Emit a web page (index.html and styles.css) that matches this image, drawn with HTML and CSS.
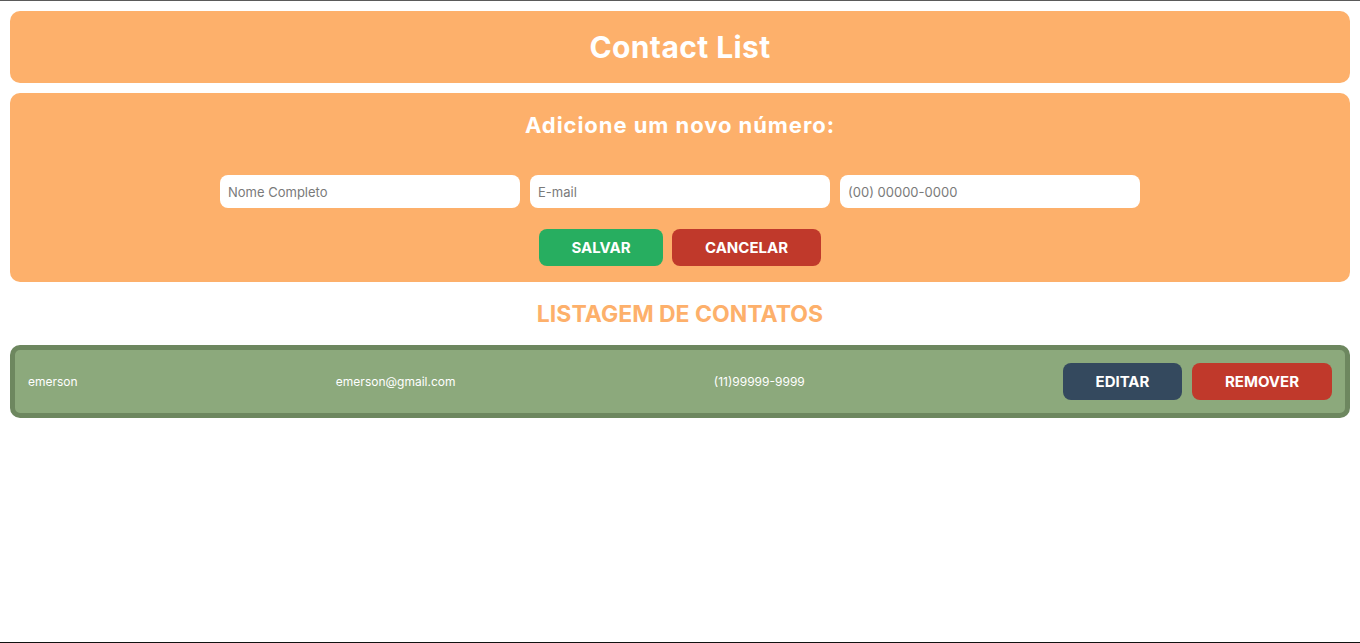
FILE: index.html
```html
<!DOCTYPE html>
<html lang="pt-BR">
<head>
<meta charset="utf-8">
<title>Contact List</title>
<link rel="stylesheet" href="styles.css">
</head>
<body>
  <header class="header">
    <h1 class="header-title">Contact List</h1>
  </header>
  <section class="form-card">
    <h2 class="form-title">Adicione um novo número:</h2>
    <div class="inputs">
      <input class="field" type="text" placeholder="Nome Completo">
      <input class="field" type="email" placeholder="E-mail">
      <input class="field" type="tel" placeholder="(00) 00000-0000">
    </div>
    <div class="actions">
      <button class="btn btn-save">SALVAR</button>
      <button class="btn btn-cancel">CANCELAR</button>
    </div>
  </section>
  <h2 class="list-title">LISTAGEM DE CONTATOS</h2>
  <ul class="contacts">
    <li class="contact">
      <span class="contact-text">emerson</span>
      <span class="contact-text">emerson@gmail.com</span>
      <span class="contact-text">(11)99999-9999</span>
      <div class="contact-actions">
        <button class="btn btn-edit">EDITAR</button>
        <button class="btn btn-remove">REMOVER</button>
      </div>
    </li>
  </ul>
</body>
</html>
```

FILE: styles.css
```css
html {
  min-height: 100vh;
  box-sizing: border-box;
  border-top: 1px solid #5a5a5a;
  border-bottom: 1px solid #111;
  background: #fff;
}
body {
  margin: 10px;
  font-family: Inter, "Noto Sans", sans-serif;
  color: #fff;
}
.header {
  background: #fdb06b;
  border-radius: 10px;
  height: 72px;
  display: flex;
  align-items: center;
  justify-content: center;
}
.header-title {
  margin: 0;
  font-size: 30px;
  font-weight: 700;
  letter-spacing: 0.4px;
}
.form-card {
  margin-top: 10px;
  background: #fdb06b;
  border-radius: 10px;
  padding: 20px 0 16px;
  display: flex;
  flex-direction: column;
  align-items: center;
}
.form-title {
  margin: 0;
  font-size: 22px;
  font-weight: 700;
  line-height: 25px;
  letter-spacing: 0.95px;
}
.inputs {
  margin-top: 37px;
  display: flex;
  gap: 10px;
}
.field {
  width: 300px;
  height: 33px;
  box-sizing: border-box;
  border: none;
  border-radius: 8px;
  padding: 0 8px;
  font-family: Inter, "Noto Sans", sans-serif;
  font-size: 13px;
  background: #fff;
  outline: none;
}
.field::placeholder {
  color: #7a7a7a;
}
.actions {
  margin-top: 21px;
  display: flex;
  gap: 9px;
}
.btn {
  border: none;
  border-radius: 8px;
  height: 37px;
  color: #fff;
  font-family: Inter, "Noto Sans", sans-serif;
  font-size: 15px;
  font-weight: 700;
  cursor: pointer;
}
.btn-save {
  width: 124px;
  background: #27ae60;
}
.btn-cancel {
  width: 149px;
  background: #c0392b;
}
.list-title {
  margin: 18px 0 0;
  text-align: center;
  color: #fdb06b;
  font-size: 23px;
  font-weight: 700;
  line-height: 28px;
}
.contacts {
  list-style: none;
  margin: 17px 0 0;
  padding: 0;
}
.contact {
  background: #8ca97c;
  border: 5px solid #6d875f;
  border-radius: 10px;
  padding: 13px;
  display: flex;
  align-items: center;
  justify-content: space-between;
}
.contact-text {
  font-size: 12px;
}
.contact-actions {
  display: flex;
  gap: 10px;
}
.btn-edit {
  width: 119px;
  background: #34495e;
}
.btn-remove {
  width: 140px;
  background: #c0392b;
}
```
